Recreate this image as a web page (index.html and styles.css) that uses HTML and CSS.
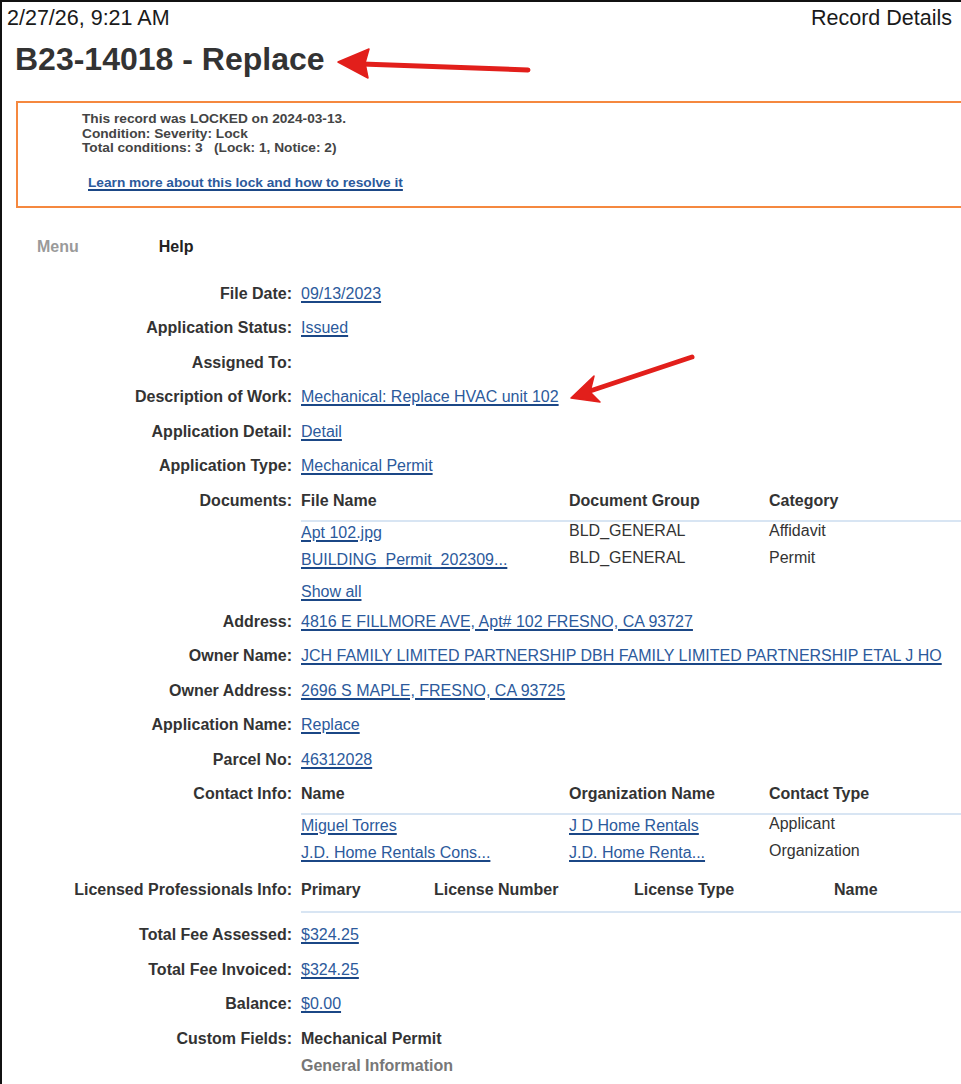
FILE: index.html
```html
<!DOCTYPE html>
<html lang="en">
<head>
<meta charset="utf-8">
<title>Record Details</title>
<link rel="stylesheet" href="styles.css">
</head>
<body>
<div class="page">
  <header class="print-head">
    <span>2/27/26, 9:21 AM</span>
    <span>Record Details</span>
  </header>

  <h1 class="record-title">B23-14018 - Replace</h1>

  <div class="lock-notice">
    <p>This record was LOCKED on 2024-03-13.<br>Condition: Severity: Lock<br>Total conditions: 3&nbsp;&nbsp;&nbsp;(Lock: 1, Notice: 2)</p>
    <a class="lock-link" href="#">Learn more about this lock and how to resolve it</a>
  </div>

  <nav class="tabs">
    <span class="tab tab-off">Menu</span>
    <span class="tab">Help</span>
  </nav>

  <dl class="fields">
    <div class="field"><dt>File Date:</dt><dd><a href="#">09/13/2023</a></dd></div>
    <div class="field"><dt>Application Status:</dt><dd><a href="#">Issued</a></dd></div>
    <div class="field"><dt>Assigned To:</dt><dd></dd></div>
    <div class="field"><dt>Description of Work:</dt><dd><a href="#">Mechanical: Replace HVAC unit 102</a></dd></div>
    <div class="field"><dt>Application Detail:</dt><dd><a href="#">Detail</a></dd></div>
    <div class="field"><dt>Application Type:</dt><dd><a href="#">Mechanical Permit</a></dd></div>

    <div class="field field-docs">
      <dt>Documents:</dt>
      <dd>
        <div class="grid-table cols-3">
          <div class="th">File Name</div>
          <div class="th">Document Group</div>
          <div class="th">Category</div>
          <div class="td td-link"><a href="#">Apt 102.jpg</a></div>
          <div class="td">BLD_GENERAL</div>
          <div class="td">Affidavit</div>
          <div class="td td-link"><a href="#">BUILDING_Permit_202309...</a></div>
          <div class="td">BLD_GENERAL</div>
          <div class="td">Permit</div>
        </div>
        <a class="show-all" href="#">Show all</a>
      </dd>
    </div>

    <div class="field"><dt>Address:</dt><dd><a href="#">4816 E FILLMORE AVE, Apt# 102 FRESNO, CA 93727</a></dd></div>
    <div class="field"><dt>Owner Name:</dt><dd><a href="#">JCH FAMILY LIMITED PARTNERSHIP DBH FAMILY LIMITED PARTNERSHIP ETAL J HO</a></dd></div>
    <div class="field"><dt>Owner Address:</dt><dd><a href="#">2696 S MAPLE, FRESNO, CA 93725</a></dd></div>
    <div class="field"><dt>Application Name:</dt><dd><a href="#">Replace</a></dd></div>
    <div class="field"><dt>Parcel No:</dt><dd><a href="#">46312028</a></dd></div>

    <div class="field field-contacts">
      <dt>Contact Info:</dt>
      <dd>
        <div class="grid-table cols-3">
          <div class="th">Name</div>
          <div class="th">Organization Name</div>
          <div class="th">Contact Type</div>
          <div class="td td-link"><a href="#">Miguel Torres</a></div>
          <div class="td td-link"><a href="#">J D Home Rentals</a></div>
          <div class="td">Applicant</div>
          <div class="td td-link"><a href="#">J.D. Home Rentals Cons...</a></div>
          <div class="td td-link"><a href="#">J.D. Home Renta...</a></div>
          <div class="td">Organization</div>
        </div>
      </dd>
    </div>

    <div class="field field-lp">
      <dt>Licensed Professionals Info:</dt>
      <dd>
        <div class="grid-table cols-4">
          <div class="th">Primary</div>
          <div class="th">License Number</div>
          <div class="th">License Type</div>
          <div class="th">Name</div>
        </div>
      </dd>
    </div>

    <div class="field"><dt>Total Fee Assessed:</dt><dd><a href="#">$324.25</a></dd></div>
    <div class="field"><dt>Total Fee Invoiced:</dt><dd><a href="#">$324.25</a></dd></div>
    <div class="field"><dt>Balance:</dt><dd><a href="#">$0.00</a></dd></div>
    <div class="field field-custom">
      <dt>Custom Fields:</dt>
      <dd>
        <div class="group-name">Mechanical Permit</div>
        <div class="subgroup-name">General Information</div>
      </dd>
    </div>
  </dl>

  <!-- red callout arrows drawn over the record -->
  <svg class="marks" width="961" height="1084" viewBox="0 0 961 1084" aria-hidden="true">
    <g fill="#e21f1b" stroke="#e21f1b" stroke-linecap="round" stroke-linejoin="round">
      <line x1="362" y1="64" x2="528" y2="70" stroke-width="5"/>
      <polygon points="338,62 369,49 365,63 368,78" stroke-width="1.5"/>
      <line x1="590" y1="391" x2="692" y2="357" stroke-width="5"/>
      <polygon points="571,398 594,376 590,392 600,402" stroke-width="1.5"/>
    </g>
  </svg>
</div>
</body>
</html>
```

FILE: styles.css
```css
html, body {
  margin: 0;
  padding: 0;
  background: #fff;
}

body {
  font-family: "Liberation Sans", Arial, sans-serif;
  color: #333;
  overflow: hidden;
}

.page {
  position: relative;
  min-height: 1084px;
  border-top: 2px solid #111;
  border-left: 2px solid #111;
  box-sizing: border-box;
  overflow: hidden;
}

/* print header line */
.print-head {
  display: flex;
  justify-content: space-between;
  padding: 4px 9px 0 5px;
  font-size: 21.5px;
  line-height: 24px;
  color: #1a1a1a;
}

.record-title {
  margin: 11px 0 0 13px;
  font-size: 32px;
  line-height: 36px;
  font-weight: bold;
  color: #333;
}

/* lock banner */
.lock-notice {
  margin: 24px -40px 0 14px;
  border: 2px solid #f5883f;
  padding: 9px 0 15px 64px;
}

.lock-notice p {
  margin: 0;
  font-size: 13.7px;
  line-height: 14.5px;
  font-weight: bold;
  color: #444;
}

.lock-link {
  display: inline-block;
  margin: 20px 0 0 6px;
  font-size: 13.7px;
  line-height: 14.5px;
  font-weight: bold;
}

a {
  color: #2c5a9c;
  text-decoration: underline;
  text-decoration-color: #1b4786;
  text-decoration-thickness: 2px;
  text-underline-offset: 2px;
}

/* tab strip */
.tabs {
  display: flex;
  gap: 80px;
  margin-top: 29px;
  padding-left: 35px;
  font-size: 16px;
  line-height: 20px;
  font-weight: bold;
}

.tab {
  color: #222;
}

.tab-off {
  color: #9a9a9a;
}

/* record fields */
.fields {
  margin: 19.75px 0 0;
  font-size: 16px;
  line-height: 20px;
}

.field {
  display: grid;
  grid-template-columns: 290px 1fr;
  column-gap: 9px;
  padding: 7.25px 0;
}

.field dt {
  text-align: right;
  font-weight: bold;
  color: #333;
  white-space: nowrap;
}

.field dd {
  margin: 0;
  white-space: nowrap;
  color: #333;
}

/* header + rows tables inside a field */
.grid-table {
  display: grid;
}

.cols-3 {
  grid-template-columns: 268px 200px 1fr;
}

.cols-4 {
  grid-template-columns: 133px 200px 200px 1fr;
}

.th {
  font-weight: bold;
  line-height: 20px;
  padding-bottom: 9px;
  border-bottom: 2px solid #d8e5f3;
}

.td {
  line-height: 18px;
  padding-bottom: 9px;
}

.td-link {
  padding-top: 2px;
  padding-bottom: 7px;
}

.show-all {
  display: inline-block;
  margin-top: 7px;
  line-height: 18px;
}

.field-docs {
  padding-bottom: 2.75px;
}

.field-contacts {
  padding-bottom: 3.75px;
}

.field-lp {
  padding-bottom: 4.75px;
}

.field-lp .th {
  padding-bottom: 11px;
}

.group-name {
  font-weight: bold;
  color: #333;
}

.subgroup-name {
  margin-top: 7px;
  font-weight: bold;
  color: #777;
}

/* annotation layer */
.marks {
  position: absolute;
  top: -2px;
  left: -2px;
  pointer-events: none;
}
```
